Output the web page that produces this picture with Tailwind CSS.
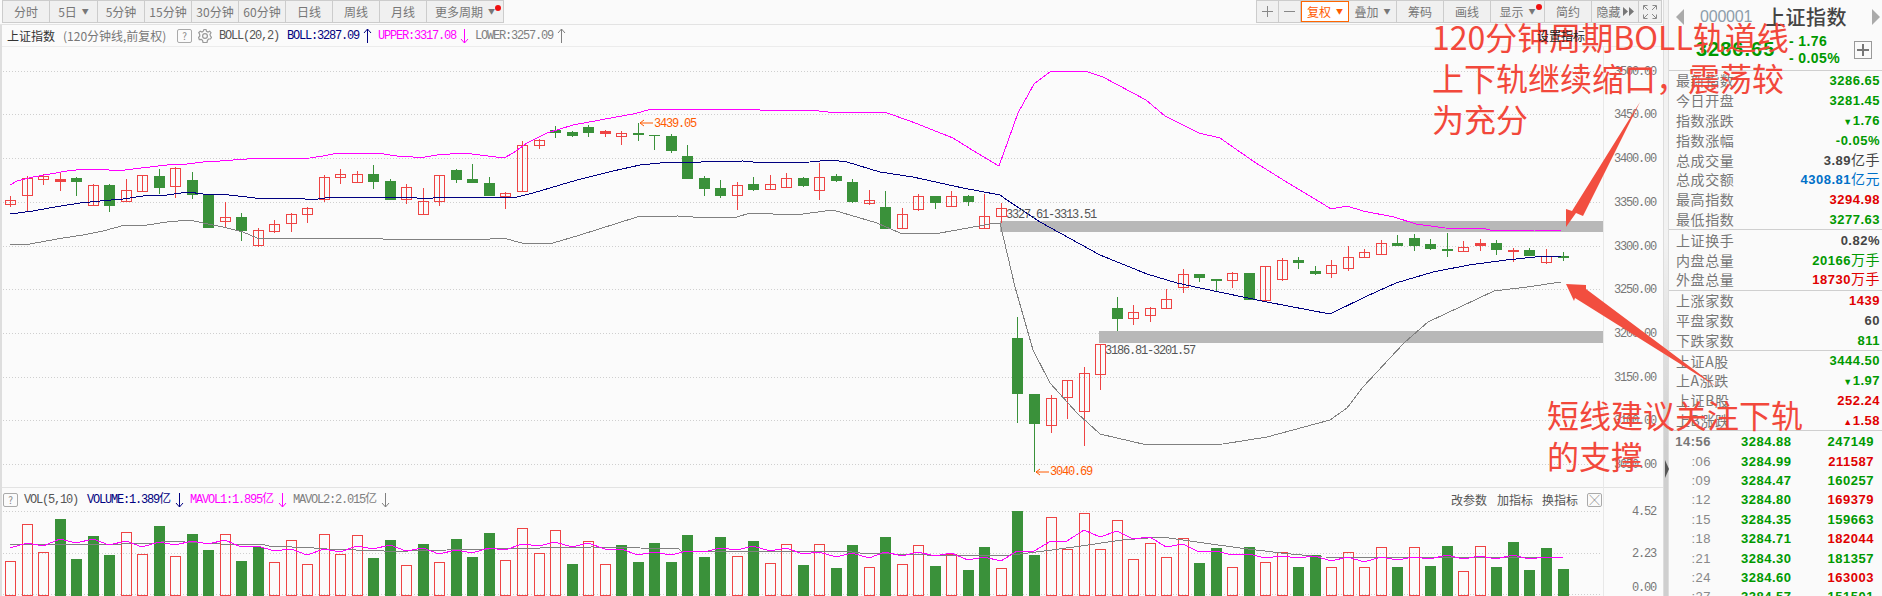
<!DOCTYPE html>
<html lang="zh-CN">
<head>
  <meta charset="UTF-8">
  <title>上证指数 120分钟线</title>
  <script src="https://cdn.jsdelivr.net/npm/@tailwindcss/browser@4"></script>
</head>
<body class="bg-[#fafafa] text-[#777] font-['Noto_Sans_CJK_SC',sans-serif] overflow-hidden">
<div class="relative flex w-[1882px] h-[596px] overflow-hidden">

  <!-- Left: toolbar + charts -->
  <div class="w-[1663px] shrink-0 flex flex-col">
    <div class="h-[25px] shrink-0 flex justify-between pl-[2px] pr-[1px] border-b border-[#e3e3e3] text-[12px]">
      <div class="flex h-[23px] border border-[#ccc] bg-[#f0f0f0] divide-x divide-[#ccc]">
        <div class="w-[47px] flex items-center justify-center">分时</div>
        <div class="w-[48px] flex items-center justify-center gap-[5px]">5日<span class="text-[7px]">▼</span></div>
        <div class="w-[47px] flex items-center justify-center">5分钟</div>
        <div class="w-[47px] flex items-center justify-center">15分钟</div>
        <div class="w-[47px] flex items-center justify-center">30分钟</div>
        <div class="w-[47px] flex items-center justify-center">60分钟</div>
        <div class="w-[47px] flex items-center justify-center">日线</div>
        <div class="w-[47px] flex items-center justify-center">周线</div>
        <div class="w-[47px] flex items-center justify-center">月线</div>
        <div class="relative w-[76px] flex items-center justify-center gap-[5px]">更多周期<span class="text-[7px]">▼</span>
          <span class="absolute right-[2px] top-[4px] w-[6px] h-[6px] rounded-full bg-[#f01010]"></span>
        </div>
      </div>
      <div class="flex h-[23px] border border-[#ccc] bg-[#f0f0f0] divide-x divide-[#ccc]">
        <div class="w-[22px] flex items-center justify-center"><svg class="w-[11px] h-[11px]" viewBox="0 0 11 11"><path d="M5.5 0V11M0 5.5H11" stroke="#888" fill="none"/></svg></div>
        <div class="w-[22px] flex items-center justify-center"><svg class="w-[11px] h-[11px]" viewBox="0 0 11 11"><path d="M0 5.5H11" stroke="#888" fill="none"/></svg></div>
        <div class="w-[48px] flex items-center justify-center gap-[5px] border border-[#ff6600] bg-white text-[#ff5a00]">复权<span class="text-[7px]">▼</span></div>
        <div class="w-[48px] flex items-center justify-center gap-[5px]">叠加<span class="text-[7px]">▼</span></div>
        <div class="w-[47px] flex items-center justify-center">筹码</div>
        <div class="w-[47px] flex items-center justify-center">画线</div>
        <div class="relative w-[54px] flex items-center justify-center gap-[5px]">显示<span class="text-[7px]">▼</span>
          <span class="absolute right-[2px] top-[3px] w-[6px] h-[6px] rounded-full bg-[#f01010]"></span>
        </div>
        <div class="w-[47px] flex items-center justify-center">简约</div>
        <div class="w-[47px] flex items-center justify-center gap-[2px]">隐藏<svg class="w-[11px] h-[9px]" viewBox="0 0 11 9"><path d="M0 0L5 4.5L0 9ZM6 0L11 4.5L6 9Z" fill="#777"/></svg></div>
        <div class="w-[22px] flex items-center justify-center"><svg class="w-[14px] h-[14px]" viewBox="0 0 14 14"><path d="M0.5 4.5V0.5H4.5M9.5 0.5H13.5V4.5M13.5 9.5V13.5H9.5M4.5 13.5H0.5V9.5M1 1L5 5M13 1L9 5M13 13L9 9M1 13L5 9" stroke="#888" fill="none"/></svg></div>
      </div>
    </div>

    <div class="flex-1 flex flex-col border-l-2 border-[#dedede] bg-[#fbfbfb]">
      <!-- Chart title row -->
      <div class="h-[22px] shrink-0 flex items-center pl-[5px] border-b border-[#ececec] whitespace-nowrap">
        <span class="w-[56px] shrink-0 text-[12px] text-[#333]">上证指数</span>
        <span class="w-[114px] shrink-0 text-[12px] text-[#777]">(120分钟线,前复权)</span>
        <span class="w-[15px] h-[14px] shrink-0 border border-[#aaa] rounded-[2px] flex items-center justify-center text-[10px] text-[#888]">?</span>
        <svg class="w-[14px] h-[14px] ml-[6px] mr-[7px] shrink-0" viewBox="0 0 14 14"><path d="M6 0.5H8L8.5 2.3L10 3L11.7 2.2L13 3.7L12 5.3L12.5 7L13.5 8.3L12.4 10L10.6 10L9.5 11.3L9 13.5H5L4.5 11.4L3.2 10.3L1.3 10.5L0.5 8.5L1.8 7L1.6 5.2L0.7 3.6L2.2 2.2L4 3L5.3 2.2Z" fill="none" stroke="#999" stroke-width="1.2"/><circle cx="7" cy="7" r="2.4" fill="none" stroke="#999" stroke-width="1.2"/></svg>
        <span class="w-[68px] shrink-0 font-['Liberation_Mono',monospace] text-[12px] tracking-[-1.2px] text-[#555]">BOLL(20,2)</span>
        <span class="w-[76px] shrink-0 font-['Liberation_Mono',monospace] text-[12px] tracking-[-1.2px] text-[#000080]">BOLL:3287.09</span>
        <svg class="w-[9px] h-[14px] shrink-0 mr-[6px] text-[#000080]" viewBox="0 0 9 14"><path d="M4.5 0V14M1 4L4.5 0L8 4" stroke="currentColor" fill="none"/></svg>
        <span class="w-[82px] shrink-0 font-['Liberation_Mono',monospace] text-[12px] tracking-[-1.2px] text-[#ff00ff]">UPPER:3317.08</span>
        <svg class="w-[9px] h-[14px] shrink-0 rotate-180 mr-[6px] text-[#ff00ff]" viewBox="0 0 9 14"><path d="M4.5 0V14M1 4L4.5 0L8 4" stroke="currentColor" fill="none"/></svg>
        <span class="w-[82px] shrink-0 font-['Liberation_Mono',monospace] text-[12px] tracking-[-1.2px] text-[#808080]">LOWER:3257.09</span>
        <svg class="w-[9px] h-[14px] shrink-0 text-[#808080]" viewBox="0 0 9 14"><path d="M4.5 0V14M1 4L4.5 0L8 4" stroke="currentColor" fill="none"/></svg>
      </div>

      <!-- Candles -->
      <svg id="price" class="h-[440px] w-[1661px] shrink-0 overflow-visible" viewBox="2 47 1661 440"></svg>

      <!-- Volume header row -->
      <div class="h-[24px] shrink-0 flex items-center border-t border-[#e3e3e3] pl-[1px] whitespace-nowrap">
        <span class="w-[15px] h-[14px] shrink-0 border border-[#aaa] rounded-[2px] flex items-center justify-center text-[10px] text-[#888]">?</span>
        <span class="w-[63px] ml-[6px] shrink-0 font-['Liberation_Mono',monospace] text-[12px] tracking-[-1.2px] text-[#555]">VOL(5,10)</span>
        <span class="w-[88px] shrink-0 font-['Liberation_Mono','Noto_Sans_CJK_SC',monospace] text-[12px] tracking-[-1.2px] text-[#000080]">VOLUME:1.389亿</span>
        <svg class="w-[9px] h-[14px] shrink-0 rotate-180 mr-[6px] text-[#000080]" viewBox="0 0 9 14"><path d="M4.5 0V14M1 4L4.5 0L8 4" stroke="currentColor" fill="none"/></svg>
        <span class="w-[88px] shrink-0 font-['Liberation_Mono','Noto_Sans_CJK_SC',monospace] text-[12px] tracking-[-1.2px] text-[#ff00ff]">MAVOL1:1.895亿</span>
        <svg class="w-[9px] h-[14px] shrink-0 rotate-180 mr-[6px] text-[#ff00ff]" viewBox="0 0 9 14"><path d="M4.5 0V14M1 4L4.5 0L8 4" stroke="currentColor" fill="none"/></svg>
        <span class="w-[88px] shrink-0 font-['Liberation_Mono','Noto_Sans_CJK_SC',monospace] text-[12px] tracking-[-1.2px] text-[#808080]">MAVOL2:2.015亿</span>
        <svg class="w-[9px] h-[14px] shrink-0 rotate-180 text-[#808080]" viewBox="0 0 9 14"><path d="M4.5 0V14M1 4L4.5 0L8 4" stroke="currentColor" fill="none"/></svg>
        <div class="ml-auto mr-[61px] flex items-center text-[12px] text-[#555]">
          <span class="w-[46px]">改参数</span>
          <span class="w-[45px]">加指标</span>
          <span class="w-[45px]">换指标</span>
          <span class="w-[15px] h-[14px] border border-[#aaa] rounded-[2px] flex items-center justify-center text-[10px] text-[#555]">╳</span>
        </div>
      </div>

      <!-- Volume bars -->
      <svg id="volume" class="h-[85px] w-[1661px] shrink-0 overflow-visible" viewBox="2 511 1661 85"></svg>
    </div>
  </div>

  <!-- Divider between chart and side panel -->
  <div class="relative w-[6px] shrink-0 border-x border-[#dddddd] bg-linear-to-b from-[#f2f2f2] from-40% to-[#cfcfcf] to-75%">
    <svg class="absolute left-[1px] top-[460px] w-[4px] h-[18px]" viewBox="0 0 4 18"><path d="M0 0L4 9L0 18Z" fill="#555"/></svg>
  </div>

  <!-- Right: quote panel -->
  <div class="flex-1 flex flex-col">
    <div class="h-[71px] shrink-0 border-b border-[#cfcfcf] pl-[7px] pr-[2px] flex flex-col">
      <div class="h-[33px] flex items-center">
        <svg class="w-[8px] h-[16px] shrink-0" viewBox="0 0 8 16"><path d="M8 0L0 8L8 16Z" fill="#aaa"/></svg>
        <span class="ml-[16px] font-['Liberation_Sans',sans-serif] text-[16px] tracking-[-0.2px] text-[#8d9eab]">000001</span>
        <span class="ml-[13px] text-[20px] font-medium text-[#444] tracking-[0.4px]">上证指数</span>
        <svg class="ml-auto w-[8px] h-[16px] shrink-0" viewBox="0 0 8 16"><path d="M0 0L8 8L0 16Z" fill="#aaa"/></svg>
      </div>
      <div class="flex items-center pl-[20px]">
        <span class="w-[93px] shrink-0 -mt-[3px] font-['Liberation_Sans',sans-serif] font-bold text-[20px] tracking-[1px] text-[#009900]">3286.65</span>
        <div class="flex flex-col font-['Liberation_Sans',sans-serif] font-bold text-[14px] tracking-[0.4px] text-[#009900] leading-[17px]">
          <span>- 1.76</span>
          <span>- 0.05%</span>
        </div>
        <svg class="ml-auto mr-[8px] w-[18px] h-[18px] shrink-0" viewBox="0 0 18 18"><rect x="0.5" y="0.5" width="17" height="17" fill="none" stroke="#999"/><path d="M9 3V15M3 9H15" stroke="#777" stroke-width="2" fill="none"/></svg>
      </div>
    </div>
    <div id="quotes" class="shrink-0"></div>
    <div id="ticks" class="pt-[1px] pl-[6px] pr-[8px]"></div>
  </div>

  <!-- Hand-drawn notes on top of the screenshot -->
  <svg class="absolute inset-0 w-[1882px] h-[596px] pointer-events-none" viewBox="0 0 1882 596">
    <path d="M1640 102L1583 216L1576 213L1566 227L1566 209L1572 211Z" fill="#f24e3f"/>
    <path d="M1566 284L1586 285L1586 289L1717 387L1575 298L1574 301Z" fill="#f24e3f"/>
  </svg>
  <div class="absolute left-[1432px] top-[16px] text-[32px] leading-[41px] text-[#f2483b] whitespace-nowrap">120分钟周期BOLL轨道线<br>上下轨继续缩口，震荡较<br>为充分</div>
  <div class="absolute left-[1547px] top-[394px] text-[32px] leading-[41px] text-[#f2483b] whitespace-nowrap">短线建议关注下轨<br>的支撑</div>
  <div class="absolute left-[1537px] top-[27px] text-[12px] text-[#222] whitespace-nowrap">设置指标</div>
</div>

<script>
  const RED = '#ee4444', GREEN = '#3a913a', NAVY = '#000080', PINK = '#ff00ff', GREY = '#808080';
  const step = 16.516;
  const cx = i => Math.round(10 + i * step);

  // [high, bodyTop, bodyBottom, low, kind]  r = hollow up, g = solid down, f = flat red
  const candles = [
    [196,200,204,207,'r'],[176,178,195,212,'r'],[174,176,179,185,'r'],[172,179,181,191,'f'],[177,178,181,196,'g'],
    [184,185,205,205,'r'],[184,185,205,212,'g'],[179,190,201,201,'r'],[175,175,191,191,'r'],[169,176,187,194,'g'],
    [167,168,186,198,'r'],[172,180,194,199,'g'],[194,194,227,228,'g'],[202,217,221,227,'r'],[213,217,230,241,'g'],
    [228,230,245,247,'r'],[220,224,231,233,'r'],[213,214,223,232,'r'],[207,208,214,223,'r'],[175,177,199,202,'r'],
    [169,174,177,184,'r'],[171,174,182,183,'r'],[165,174,181,189,'g'],[179,181,199,200,'g'],[184,187,199,204,'r'],
    [188,201,214,214,'r'],[175,175,201,206,'r'],[169,170,179,183,'g'],[164,179,182,183,'g'],[177,183,195,196,'g'],
    [192,193,196,209,'r'],[141,145,191,191,'r'],[139,140,145,149,'r'],[126,130,132,138,'g'],[131,132,135,137,'g'],
    [125,127,132,137,'g'],[130,131,133,137,'f'],[131,133,136,145,'r'],[123,133,134,141,'g'],[135,135,135,150,'g'],
    [134,136,150,153,'g'],[145,156,178,178,'g'],[176,178,188,196,'g'],[180,188,195,198,'g'],[182,185,195,210,'r'],
    [177,184,189,191,'g'],[175,184,189,189,'r'],[173,178,187,187,'r'],[177,178,185,187,'g'],[163,177,190,200,'r'],
    [174,176,180,182,'g'],[179,182,201,203,'g'],[190,200,203,205,'r'],[191,207,228,229,'g'],[208,214,228,228,'r'],
    [194,196,209,211,'r'],[196,196,202,209,'g'],[191,196,206,206,'r'],[195,196,201,206,'g'],[194,216,228,228,'r'],
    [203,208,216,223,'r'],[317,338,393,423,'g'],[394,394,423,472,'g'],[395,398,425,433,'r'],[380,380,397,419,'r'],
    [367,373,411,446,'r'],[344,344,374,390,'r'],[297,308,318,331,'g'],[305,312,318,325,'r'],[307,308,315,322,'r'],
    [289,299,308,308,'r'],[269,274,287,293,'r'],[274,274,277,282,'g'],[279,279,280,292,'g'],[272,273,280,288,'r'],
    [273,273,299,299,'g'],[266,266,300,300,'r'],[258,260,279,281,'r'],[257,260,262,269,'g'],[266,271,273,275,'g'],
    [260,265,273,278,'r'],[246,257,268,271,'r'],[249,252,257,258,'r'],[240,243,254,254,'r'],[235,243,245,245,'g'],
    [234,238,245,251,'g'],[239,244,248,250,'g'],[233,249,250,257,'g'],[241,247,251,251,'r'],[239,243,245,251,'f'],
    [240,243,249,255,'g'],[248,250,251,262,'f'],[248,250,255,255,'g'],[249,256,262,264,'r'],[252,256,257,261,'g']
  ];

  const upper = [[10,185],[17,181],[33,177],[50,174],[67,171],[85,169],[100,169],[118,171],[133,169],[150,167],[167,165],[187,164],[203,162],[220,161],[247,159],[310,158],[323,156],[338,153],[377,153],[397,156],[413,157],[425,157],[437,155],[463,153],[480,155],[504,158],[513,153],[527,143],[547,133],[573,125],[600,120],[633,114],[652,109],[663,109],[743,109],[760,110],[810,110],[828,112],[860,112],[887,113],[910,121],[953,138],[977,153],[999,166],[1018,113],[1034,84],[1050,72],[1065,71],[1085,71],[1103,77],[1146,100],[1165,116],[1199,133],[1220,138],[1240,152],[1256,163],[1293,186],[1320,202],[1331,209],[1347,206],[1363,211],[1394,217],[1416,224],[1445,228],[1486,229],[1494,231],[1535,230],[1561,230]];
  const middle = [[10,214],[33,211],[55,207],[80,203],[100,201],[123,199],[143,196],[167,195],[188,192],[203,194],[220,194],[247,197],[255,198],[300,198],[310,200],[333,197],[400,197],[417,198],[433,198],[447,197],[480,197],[513,198],[533,193],[577,180],[613,171],[640,165],[660,163],[743,161],[763,163],[810,162],[830,160],[847,162],[880,172],[913,177],[963,188],[1000,195],[1007,200],[1040,222],[1100,255],[1147,274],[1177,283],[1200,288],[1243,297],[1267,302],[1330,314],[1367,296],[1396,283],[1433,272],[1469,265],[1506,260],[1535,257],[1561,256]];
  const lower = [[10,244],[30,244],[57,239],[83,235],[103,231],[125,225],[147,225],[167,222],[190,220],[203,223],[223,227],[243,232],[257,238],[283,238],[300,239],[317,238],[347,238],[353,239],[367,238],[383,239],[463,239],[490,239],[503,238],[522,243],[553,243],[580,235],[637,217],[678,216],[693,217],[737,217],[750,213],[795,215],[833,210],[877,223],[900,233],[940,233],[990,224],[1000,223],[1015,287],[1033,350],[1050,383],[1077,413],[1100,434],[1147,445],[1223,444],[1267,437],[1330,420],[1347,408],[1363,387],[1404,343],[1428,322],[1494,291],[1527,287],[1561,282]];

  const volTop = [561,524,552,519,559,536,555,532,554,526,556,534,550,534,561,547,562,540,564,534,554,535,558,540,565,544,562,539,557,533,560,528,553,530,564,541,564,545,562,543,562,535,557,537,556,541,563,544,565,544,568,545,567,537,564,545,566,554,570,547,568,511,555,517,549,513,549,520,559,543,557,538,563,548,567,547,562,552,567,555,567,552,567,547,567,547,566,546,571,546,567,542,570,548,569];
  const volKind = 'rrrggggrrg' + 'rggrggrrrr' + 'rrggrgrggg' + 'rrrrgrrggg' + 'ggggrgrrgr' + 'ggrgrrgrgg' + 'rggrrrrrrr' + 'rrggrgrrgg' + 'rrrrgrggrr' + 'ggggg';
  const ma1 = [548,543,546,539,543,539,545,541,547,542,545,541,544,540,547,546,551,549,555,549,552,546,549,545,551,548,554,550,553,548,550,544,546,542,547,543,549,549,555,552,555,551,552,548,550,546,551,548,554,552,557,553,558,552,556,552,556,553,560,557,561,551,551,541,541,530,537,531,539,537,547,544,552,551,555,554,558,556,558,556,561,557,562,557,560,557,559,555,559,556,559,555,559,557,558];
  const ma2 = [[10,544],[122,544],[155,543],[167,541],[220,544],[265,545],[269,546],[314,548],[327,549],[384,551],[408,551],[447,550],[490,549],[592,547],[640,548],[679,549],[681,551],[844,551],[860,553],[893,554],[926,555],[1003,556],[1028,553],[1052,550],[1081,546],[1122,540],[1162,537],[1211,544],[1240,548],[1281,553],[1322,557],[1561,558]];

  const poly = (pts, color) => `<polyline points="${pts.map(p => p.join(',')).join(' ')}" fill="none" stroke="${color}" stroke-width="1" shape-rendering="crispEdges"/>`;
  const hline = y => `<line x1="3" x2="1600" y1="${y}" y2="${y}" stroke="#cfcfcf" stroke-dasharray="1 2" shape-rendering="crispEdges"/>`;
  const axis = '<line x1="1603.5" x2="1603.5" y1="47" y2="596" stroke="#e8e8e8"/>';
  const label = (x, y, text, cls, anchor = 'start') => `<text x="${x}" y="${y}" text-anchor="${anchor}" class="font-['Liberation_Mono',monospace] text-[12px] tracking-[-1.2px] ${cls}">${text}</text>`;

  function bar(x, top, bottom, color, solid) {
    return solid
      ? `<rect x="${x - 5}" y="${top}" width="11" height="${bottom - top + 1}" fill="${color}" shape-rendering="crispEdges"/>`
      : `<rect x="${x - 4.5}" y="${top + .5}" width="10" height="${bottom - top}" fill="none" stroke="${color}" shape-rendering="crispEdges"/>`;
  }

  // price pane
  let price = axis;
  for (let k = 0; k < 10; k++) {
    const y = Math.round(70.7 + 43.7 * k);
    price += hline(y) + label(1656, y + 4, (3500 - 50 * k).toFixed(2), 'fill-[#777]', 'end');
  }
  price += '<rect x="1000" y="221" width="603" height="11" fill="#b8b8b8"/><rect x="1099" y="331" width="504" height="12" fill="#b8b8b8"/>';
  candles.forEach(([hi, top, bot, lo, kind], i) => {
    const x = cx(i), color = kind === 'g' ? GREEN : RED;
    price += `<line x1="${x + .5}" x2="${x + .5}" y1="${hi}" y2="${lo}" stroke="${color}" shape-rendering="crispEdges"/>`;
    price += bar(x, top, bot, color, kind !== 'r');
  });
  price += poly(lower, GREY) + poly(middle, NAVY) + poly(upper, PINK);
  price += label(1006, 218, '3327.61-3313.51', 'fill-[#555]') + label(1105, 354, '3186.81-3201.57', 'fill-[#555]');
  price += label(654, 127, '3439.05', 'fill-[#ff5a00]') + label(1050, 475, '3040.69', 'fill-[#ff5a00]');
  price += '<path d="M653 123H640M644 120L640 123L644 126M1049 472H1036M1040 469L1036 472L1040 475" fill="none" stroke="#ff5a00"/>';
  document.getElementById('price').innerHTML = price;

  // volume pane
  let vol = axis + hline(511) + hline(553) + hline(594);
  [[515, '4.52'], [557, '2.23'], [591, '0.00']].forEach(([y, t]) => vol += label(1656, y, t, 'fill-[#777]', 'end'));
  volTop.forEach((top, i) => {
    const solid = volKind[i] === 'g';
    vol += bar(cx(i), top, 595, solid ? GREEN : RED, solid);
  });
  vol += poly(ma2, GREY) + poly(ma1.map((y, i) => [cx(i), y]), PINK);
  document.getElementById('volume').innerHTML = vol;

  // quote panel
  const G = 'text-[#009900]', R = 'text-[#e00000]';
  const groups = [
    [['最新指数','3286.65',G],['今日开盘','3281.45',G],['指数涨跌','<span class="text-[9px]">▼</span>1.76',G],['指数涨幅','-0.05%',G],
     ['总成交量','3.89<span class="text-[14px] font-normal">亿手</span>','text-[#444]'],['总成交额','4308.81<span class="text-[14px] font-normal">亿元</span>','text-[#0070c8]'],
     ['最高指数','3294.98',R],['最低指数','3277.63',G]],
    [['上证换手','0.82%','text-[#444]'],['内盘总量','20166<span class="text-[14px] font-normal">万手</span>',G],['外盘总量','18730<span class="text-[14px] font-normal">万手</span>',R]],
    [['上涨家数','1439',R],['平盘家数','60','text-[#444]'],['下跌家数','811',G]],
    [['上证A股','3444.50',G],['上A涨跌','<span class="text-[9px]">▼</span>1.97',G],['上证B股','252.24',R],['上B涨跌','<span class="text-[9px]">▲</span>1.58',R]]
  ];
  document.getElementById('quotes').innerHTML = groups.map(rows => `
    <div class="border-b border-[#cfcfcf] pl-[7px] pr-[2px] flex flex-col">
      ${rows.map(([name, value, color]) => `
        <div class="h-[19.8px] flex items-center justify-between">
          <span class="text-[14px] tracking-[0.6px] text-[#777]">${name}</span>
          <span class="font-['Liberation_Sans','Noto_Sans_CJK_SC',sans-serif] font-bold text-[13px] tracking-[0.5px] ${color}">${value}</span>
        </div>`).join('')}
    </div>`).join('');

  const ticks = [
    ['14:56','3284.88','247149',G],[':06','3284.99','211587',R],[':09','3284.47','160257',G],[':12','3284.80','169379',R],
    [':15','3284.35','159663',G],[':18','3284.71','182044',R],[':21','3284.30','181357',G],[':24','3284.60','163003',R],[':27','3284.57','151501',G]
  ];
  document.getElementById('ticks').innerHTML = ticks.map(([t, p, v, color], i) => `
    <div class="h-[19.4px] flex items-center justify-between font-['Liberation_Sans',sans-serif] text-[13px] tracking-[0.5px]">
      <span class="w-[36px] text-right ${i === 0 ? 'font-bold text-[#777]' : 'text-[#888]'}">${t}</span>
      <span class="ml-[30px] font-bold text-[#009900]">${p}</span>
      <span class="ml-auto font-bold ${color}">${v}</span>
    </div>`).join('');
</script>
</body>
</html>
